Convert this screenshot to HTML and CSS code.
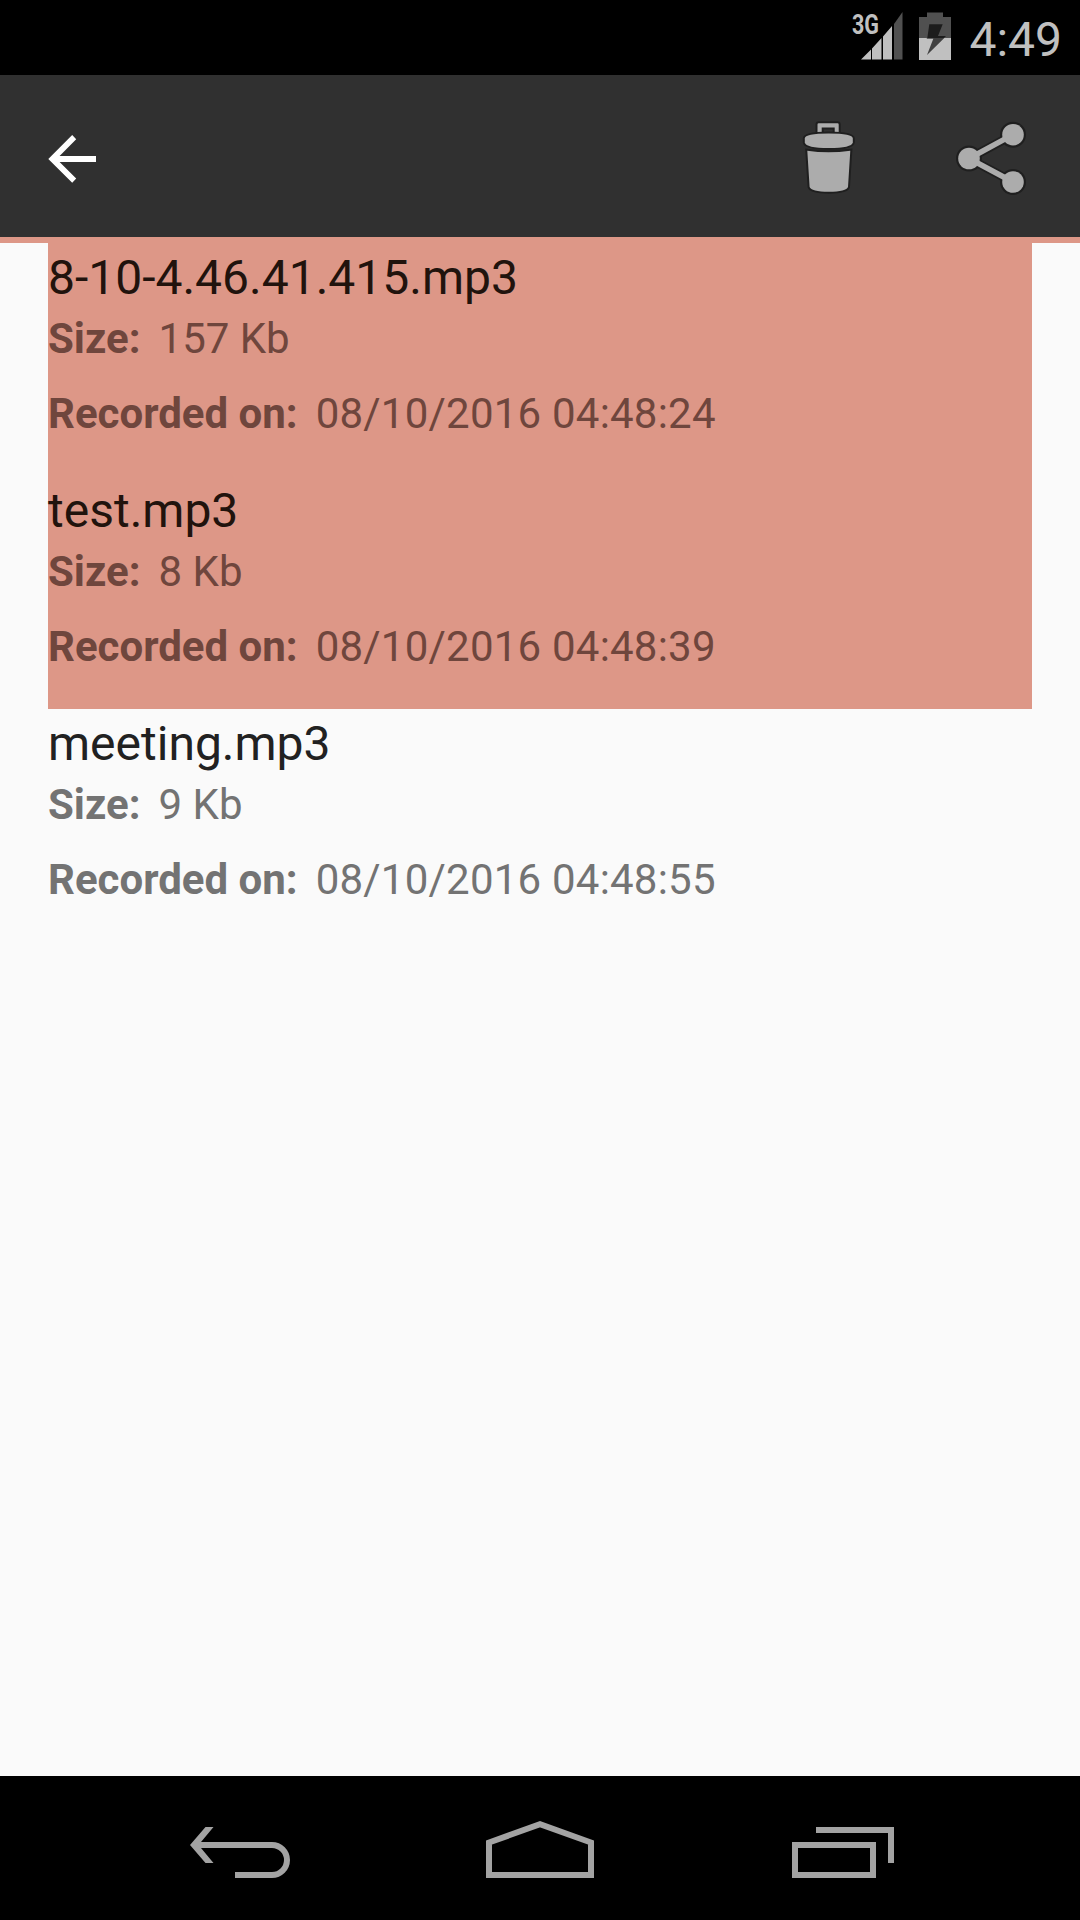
FILE: index.html
```html
<!DOCTYPE html>
<html lang="en">
<head>
    <meta charset="UTF-8">
    <meta name="viewport" content="width=device-width, initial-scale=1.0">
    <title>Recordings</title>
    <link rel="stylesheet" href="styles.css">
</head>
<body>
    <!-- Status bar -->
    <div class="status-bar">
        <svg class="signal-icon" width="54" height="75" viewBox="850 0 54 75">
            <text class="network-type" x="852" y="34" textLength="27" lengthAdjust="spacingAndGlyphs">3G</text>
            <path fill="#c0c0c0" d="M861 59.5L871 49.5V59.5ZM872 48.5L881.5 38V59.5H872ZM883 36.5L892 26V59.5H883Z"/>
            <path fill="#505050" d="M894 24L902.5 12V59.5H894Z"/>
        </svg>
        <svg class="battery-icon" width="32" height="48" viewBox="919 12 32 48">
            <path fill="#505050" d="M927 12.500h16v4.500h8v21h-32V17h8z"/>
            <path fill="#c0c0c0" d="M919 38h32v22h-32z"/>
            <path fill="#1c1c1c" d="M929.3 24.3h13.4L938 36h8l-2 2h-16.7z"/>
            <path fill="#404040" d="M926.8 38H944.3L927 55l6.3-16.3h-6.5z"/>
        </svg>
        <span class="clock">4:49</span>
    </div>

    <!-- Action bar -->
    <div class="action-bar">
        <button class="action-button">
            <svg width="48" height="48" viewBox="48 135 48 48">
                <path fill="#fff" d="M96 156v6H59.6l16.6 16.6-4 4.1L48.3 159l23.9-23.9 4 4.1L59.6 156z"/>
            </svg>
        </button>
        <span class="spacer"></span>
        <button class="action-button">
            <svg width="56" height="76" viewBox="801 121 56 76">
                <g fill="#acacac" stroke="#1f1f1f" stroke-width="4" paint-order="stroke">
                    <path fill-rule="evenodd" d="M817.5 136v-11.5q0-1.2 1.2-1.2h18.8q1.2 0 1.2 1.2V136h-4v-8.5h-13V136z"/>
                    <path d="M804.8 138.5q0-5 24-5t24 5v4q-1 5.500-24 5.500t-24-5.500z"/>
                    <path d="M807.300 150.800q21 3 43 0L848 187q-1.500 4.700-19.200 4.700T809.600 187z"/>
                </g>
            </svg>
        </button>
        <button class="action-button">
            <svg width="72" height="76" viewBox="955 121 72 76">
                <g fill="#1f1f1f" stroke="#1f1f1f" stroke-width="4">
                    <path d="M1013 134.700L969 158.500L1013 182" fill="none" stroke-width="9"/>
                    <circle cx="1013" cy="134.700" r="11"/>
                    <circle cx="969" cy="158.500" r="11"/>
                    <circle cx="1013" cy="182" r="11"/>
                </g>
                <g fill="#acacac">
                    <path d="M1013 134.700L969 158.500L1013 182" fill="none" stroke="#acacac" stroke-width="5.500"/>
                    <circle cx="1013" cy="134.700" r="10.800"/>
                    <circle cx="969" cy="158.500" r="10.800"/>
                    <circle cx="1013" cy="182" r="10.800"/>
                </g>
            </svg>
        </button>
    </div>

    <!-- Recordings -->
    <ul class="recording-list">
        <li class="recording selected">
            <div class="file-name">8-10-4.46.41.415.mp3</div>
            <div class="detail"><b>Size:</b><span>157 Kb</span></div>
            <div class="detail"><b>Recorded on:</b><span class="date">08/10/2016 04:48:24</span></div>
        </li>
        <li class="recording selected">
            <div class="file-name">test.mp3</div>
            <div class="detail"><b>Size:</b><span>8 Kb</span></div>
            <div class="detail"><b>Recorded on:</b><span class="date">08/10/2016 04:48:39</span></div>
        </li>
        <li class="recording">
            <div class="file-name">meeting.mp3</div>
            <div class="detail"><b>Size:</b><span>9 Kb</span></div>
            <div class="detail"><b>Recorded on:</b><span class="date">08/10/2016 04:48:55</span></div>
        </li>
    </ul>

    <!-- Navigation bar -->
    <div class="nav-bar">
        <button class="nav-button">
            <svg width="160" height="144" viewBox="160 1776 160 144">
                <path fill="#a3a3a3" d="M190 1845l15.500-18h8L201 1842h71a18 18 0 0 1 0 36h-37v-6h37a12 12 0 0 0 0-24h-71l12.500 15h-8z"/>
            </svg>
        </button>
        <button class="nav-button">
            <svg width="160" height="144" viewBox="460 1776 160 144">
                <path fill="none" stroke="#a3a3a3" stroke-width="6" d="M489 1875v-32.500l51-18.300 51 18.300V1875z"/>
            </svg>
        </button>
        <button class="nav-button">
            <svg width="160" height="144" viewBox="760 1776 160 144">
                <path fill="none" stroke="#a3a3a3" stroke-width="6" d="M795 1845h78v30h-78zM816 1830h75v33"/>
            </svg>
        </button>
    </div>
</body>
</html>
```
FILE: styles.css
```css
body {
    font-family: Roboto, sans-serif;
    margin: 0;
    height: 1920px;
    display: flex;
    flex-direction: column;
    background-color: #fafafa;
    overflow: hidden;
}

button {
    border: none;
    padding: 0;
    background: none;
    cursor: pointer;
}

svg {
    display: block;
}

.status-bar {
    display: flex;
    justify-content: flex-end;
    height: 75px;
    box-sizing: border-box;
    padding-right: 18px;
    background-color: #000;
}

.network-type {
    font-size: 28px;
    font-weight: bold;
    fill: #c0c0c0;
}

.battery-icon {
    margin: 12px 18px 0 15px;
}

.clock {
    margin-top: 10px;
    color: #c0c0c0;
    font-size: 48px;
    line-height: 60px;
}

.action-bar {
    display: flex;
    align-items: center;
    height: 156px;
    padding: 6px 53px 0 48px; /* icons sit slightly below the middle */
    background-color: #303030;
    border-bottom: 6px solid #dd9787;
}

.spacer {
    flex: 1;
}

.action-button + .action-button {
    margin-left: 98px;
}

.recording-list {
    flex: 1;
    list-style: none;
    margin: 0;
    padding: 0 48px;
}

.recording {
    height: 233px;
    box-sizing: border-box;
    padding-top: 6px;
    color: #737373;
}

.file-name {
    color: #212121;
    font-size: 48px;
    line-height: 57px;
    margin-bottom: 8px;
}

.detail {
    display: flex;
    gap: 18px;
    font-size: 42px;
    line-height: 49px;
    margin-bottom: 26px;
}

.date {
    letter-spacing: 0.22px;
}

.selected {
    background-color: #dd9787;
    color: #6f463d;
}

.selected .file-name {
    color: #21130d;
}

.nav-bar {
    display: flex;
    justify-content: center;
    gap: 140px;
    height: 144px;
    background-color: #000;
}
```
